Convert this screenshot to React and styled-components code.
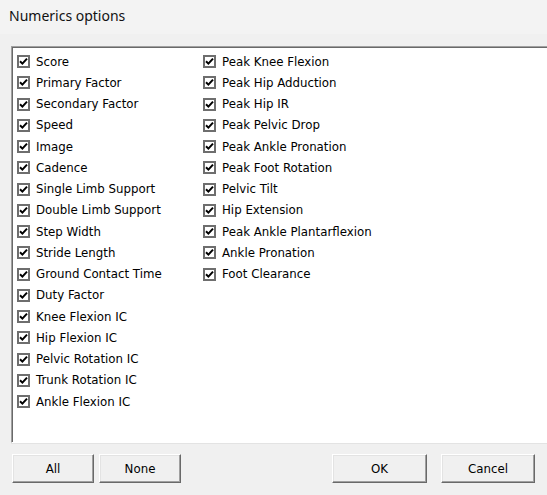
import React from 'react';
import styled, { createGlobalStyle } from 'styled-components';

const GlobalStyle = createGlobalStyle`
  html, body {
    margin: 0;
    padding: 0;
    background: #f0f0f0;
    overflow: hidden;
  }
  body {
    font-family: "DejaVu Sans", Tahoma, sans-serif;
  }
`;

const Dialog = styled.div`
  width: 547px;
  height: 495px;
  display: flex;
  flex-direction: column;
  background: #f0f0f0;
`;

const TitleBar = styled.div`
  height: 34px;
  background: #f3f3f3;
  display: flex;
  align-items: center;
  padding-left: 9px;
  padding-bottom: 4px;
  box-sizing: border-box;
  font-family: "Noto Sans", "Open Sans", sans-serif;
  font-size: 14px;
  color: #111;
`;

const Body = styled.div`
  flex: 1;
  padding: 12px 0 0 11px;
  display: flex;
  flex-direction: column;
`;

const ListPanel = styled.div`
  width: 560px;
  height: 397px;
  box-sizing: border-box;
  background: #fff;
  border-top: 1px solid #a0a0a0;
  border-left: 1px solid #a0a0a0;
  border-bottom: 1px solid #fff;
  box-shadow: inset 1px 1px 0 #696969, 0 1px 0 #e3e3e3;
  padding: 4px 0 0 5px;
  display: grid;
  grid-template-columns: 186px 1fr;
`;

const Column = styled.div`
  display: flex;
  flex-direction: column;
`;

const Row = styled.label`
  height: 21.25px;
  display: flex;
  align-items: center;
  gap: 6px;
  font-size: 11.8px;
  color: #000;
  white-space: nowrap;
`;

const Box = styled.span`
  width: 13px;
  height: 13px;
  box-sizing: border-box;
  border: 2px solid #6e6e6e;
  background: #fff;
  display: flex;
  align-items: center;
  justify-content: center;
  flex-shrink: 0;
`;

const ButtonBar = styled.div`
  display: flex;
  align-items: center;
  margin-top: 11px;
  padding-left: 1px;
`;

const Button = styled.button`
  width: ${p => p.$w}px;
  height: 29px;
  margin-right: ${p => p.$gap || 0}px;
  box-sizing: border-box;
  background: #f0f0f0;
  border: 1px solid;
  border-color: #fff #696969 #696969 #fff;
  box-shadow: inset -1px -1px 0 #a0a0a0, inset 1px 1px 0 #e3e3e3;
  font-family: "DejaVu Sans", Tahoma, sans-serif;
  font-size: 11.8px;
  color: #000;
  padding: 0;
`;

const Spacer = styled.div`
  flex: 1;
`;

const Check = () => (
  <Box>
    <svg width="9" height="9" viewBox="0 0 9 9">
      <path d="M1 4.2 L3.4 6.6 L8 1.6" fill="none" stroke="#000" strokeWidth="2" />
    </svg>
  </Box>
);

const left = [
  'Score', 'Primary Factor', 'Secondary Factor', 'Speed', 'Image', 'Cadence',
  'Single Limb Support', 'Double Limb Support', 'Step Width', 'Stride Length',
  'Ground Contact Time', 'Duty Factor', 'Knee Flexion IC', 'Hip Flexion IC',
  'Pelvic Rotation IC', 'Trunk Rotation IC', 'Ankle Flexion IC'
];

const right = [
  'Peak Knee Flexion', 'Peak Hip Adduction', 'Peak Hip IR', 'Peak Pelvic Drop',
  'Peak Ankle Pronation', 'Peak Foot Rotation', 'Pelvic Tilt', 'Hip Extension',
  'Peak Ankle Plantarflexion', 'Ankle Pronation', 'Foot Clearance'
];

export default function App() {
  return (
    <Dialog>
      <GlobalStyle />
      <TitleBar>Numerics options</TitleBar>
      <Body>
        <ListPanel>
          <Column>
            {left.map(item => (
              <Row key={item}><Check />{item}</Row>
            ))}
          </Column>
          <Column>
            {right.map(item => (
              <Row key={item}><Check />{item}</Row>
            ))}
          </Column>
        </ListPanel>
        <ButtonBar>
          <Button $w={82} $gap={5}>All</Button>
          <Button $w={82}>None</Button>
          <Spacer />
          <Button $w={95} $gap={14}>OK</Button>
          <Button $w={94} $gap={12}>Cancel</Button>
        </ButtonBar>
      </Body>
    </Dialog>
  );
}
